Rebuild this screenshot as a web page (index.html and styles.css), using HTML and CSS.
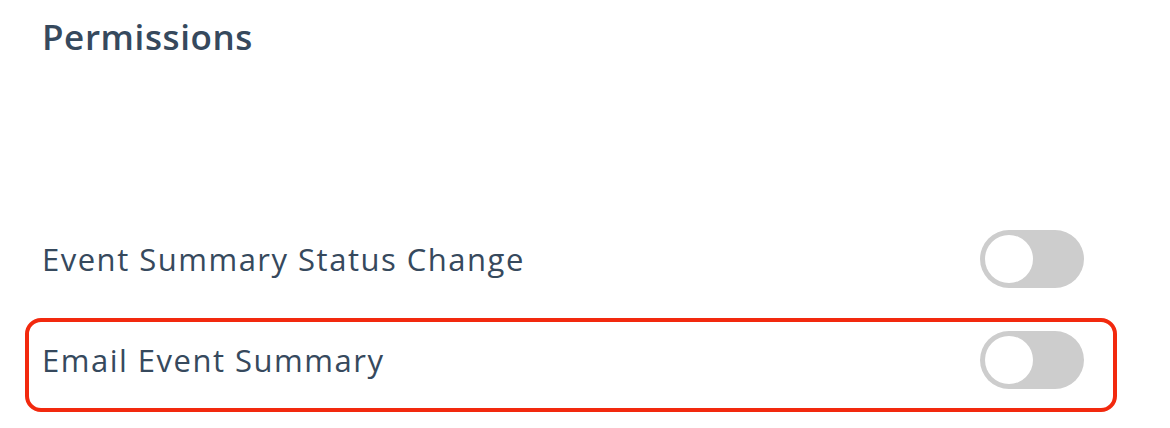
FILE: index.html
```html
<!DOCTYPE html>
<html>
<head>
<meta charset="utf-8">
<link rel="stylesheet" href="styles.css">
</head>
<body>
<div class="page">
  <h1 class="title">Permissions</h1>
  <div class="list">
    <div class="row">
      <span class="label">Event Summary Status Change</span>
      <span class="toggle"><span class="knob"></span></span>
    </div>
    <div class="row row-highlight">
      <span class="label">Email Event Summary</span>
      <span class="toggle"><span class="knob"></span></span>
    </div>
  </div>
</div>
</body>
</html>
```
FILE: styles.css
```css
html, body {
  margin: 0;
  padding: 0;
  background: #ffffff;
}
.page {
  width: 1042px;
  padding: 14px 0 0 42px;
  font-family: "Open Sans", Lato, sans-serif;
  color: #36495d;
}
.title {
  margin: 0;
  font-size: 35px;
  font-weight: 600;
  line-height: 46px;
  letter-spacing: 0.6px;
}
.list {
  margin-top: 170px;
  display: flex;
  flex-direction: column;
}
.row {
  display: flex;
  align-items: center;
  justify-content: space-between;
  height: 58px;
}
.row-highlight {
  margin: 30px -33px 0 -17px;
  padding: 9px 29px 19px 13px;
  border: 4px solid #f2290e;
  border-radius: 16px;
}
.label {
  font-size: 31px;
  line-height: 40px;
  letter-spacing: 1.5px;
}
.toggle {
  width: 104px;
  height: 58px;
  border-radius: 29px;
  background: #cdcdcd;
  display: flex;
  align-items: center;
  padding-left: 5px;
  box-sizing: border-box;
}
.knob {
  width: 48px;
  height: 48px;
  border-radius: 50%;
  background: #ffffff;
}
```
